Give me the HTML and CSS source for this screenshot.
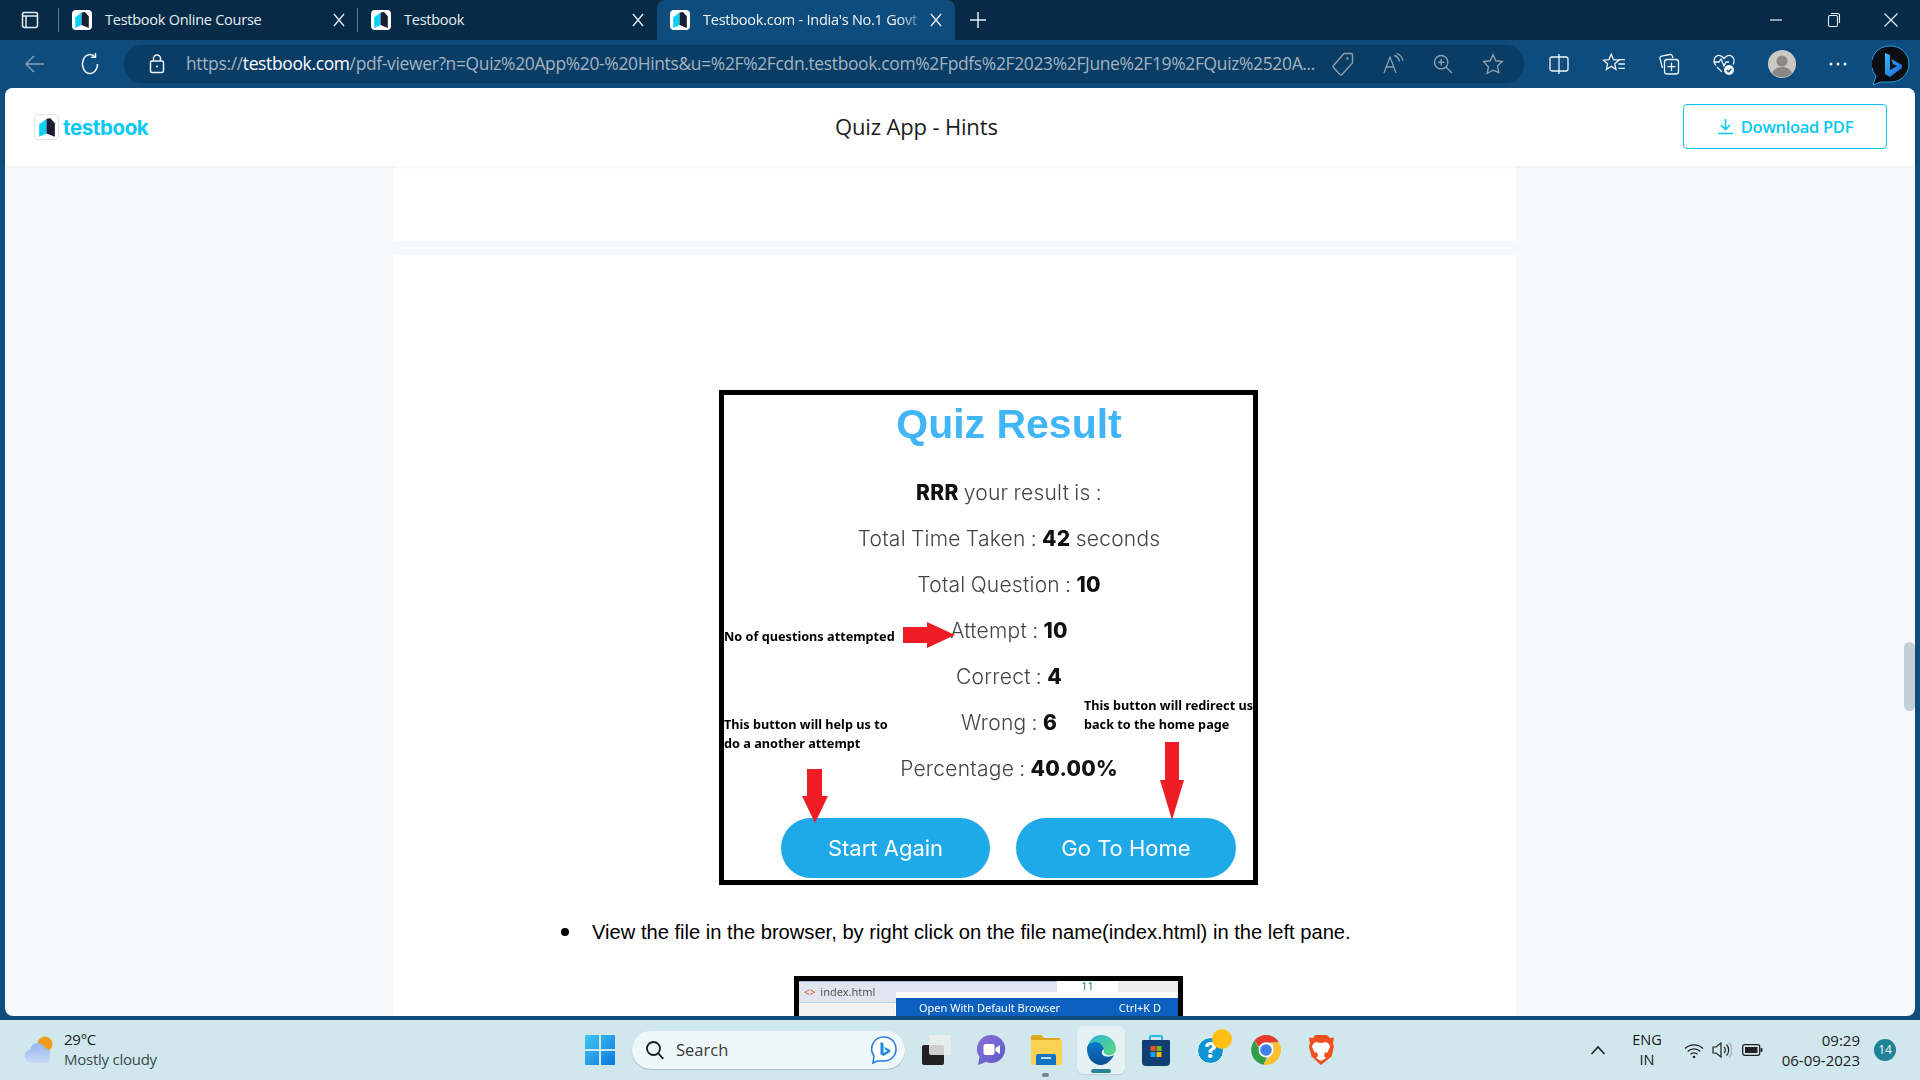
FILE: index.html
```html
<!DOCTYPE html>
<html lang="en">
<head>
<meta charset="utf-8">
<title>Testbook.com - India's No.1 Govt Exam Preparation</title>
<link rel="stylesheet" href="styles.css">
</head>
<body>
<svg class="defs" width="0" height="0" aria-hidden="true">
  <symbol id="book" viewBox="4 3 16 18.500">
    <path d="M5 9.500 11.600 4.500V17.500L5 20.500Z" fill="#0ad0f5"/>
    <path d="M11.600 4.500 15 4 19 8.500V20.500L11.600 17.500Z" fill="#1b1d33"/>
  </symbol>
  <symbol id="close" viewBox="0 0 12 14">
    <path d="M1 1l10 12M11 1 1 13" fill="none" stroke="#e6edf2" stroke-width="1.300"/>
  </symbol>
</svg>

<div class="titlebar">
  <div class="tabstrip-btn">
    <svg width="20" height="20" viewBox="0 0 20 20" fill="none" stroke="#e6edf2" stroke-width="1.5"><rect x="2.500" y="2.500" width="15" height="15" rx="2"/><path d="M2.500 6h15M6 6v11.500"/></svg>
  </div>
  <div class="tab">
    <span class="fav"><svg width="16" height="18"><use href="#book"/></svg></span>
    <span class="tab-title">Testbook Online Course</span>
    <svg class="tab-x" width="12" height="14"><use href="#close"/></svg>
  </div>
  <div class="tab">
    <span class="fav"><svg width="16" height="18"><use href="#book"/></svg></span>
    <span class="tab-title">Testbook</span>
    <svg class="tab-x" width="12" height="14"><use href="#close"/></svg>
  </div>
  <div class="tab tab-active">
    <span class="fav"><svg width="16" height="18"><use href="#book"/></svg></span>
    <span class="tab-title tab-fade">Testbook.com - India's No.1 Govt</span>
    <svg class="tab-x" width="12" height="14"><use href="#close"/></svg>
  </div>
  <div class="newtab">
    <svg width="18" height="18" viewBox="0 0 18 18" stroke="#e6edf2" stroke-width="1.5"><path d="M9 1v16M1 9h16"/></svg>
  </div>
  <div class="winctl">
    <span class="wbtn"><svg width="14" height="14" viewBox="0 0 14 14" stroke="#e6edf2" stroke-width="1.200"><path d="M1 7h12"/></svg></span>
    <span class="wbtn"><svg width="14" height="16" viewBox="0 0 14 16" fill="none" stroke="#e6edf2" stroke-width="1.100"><rect x="1.500" y="3.500" width="9" height="11" rx="1.500"/><path d="M4 1.500h6.500a2 2 0 0 1 2 2V11"/></svg></span>
    <span class="wbtn"><svg width="14" height="14" viewBox="0 0 14 14" stroke="#e6edf2" stroke-width="1.200"><path d="M.5.5l13 13M13.500.5l-13 13"/></svg></span>
  </div>
</div>

<div class="toolbar">
  <span class="tb tb-first"><svg width="22" height="22" viewBox="0 0 22 22" fill="none" stroke="#7d9cb5" stroke-width="1.5"><path d="M20 11H2M10 3l-8 8 8 8"/></svg></span>
  <span class="tb"><svg width="22" height="24" viewBox="0 0 22 24" fill="none" stroke="#f0f4f7" stroke-width="1.500"><path d="M18.500 12a7.500 9.500 0 1 1-2.600-7.200"/><path d="M16.500 1v4.300h-4.300"/></svg></span>
  <div class="urlbar">
    <span class="lock"><svg width="16" height="20" viewBox="0 0 16 20" fill="none" stroke="#f0f4f7" stroke-width="1.5"><rect x="1.500" y="7" width="13" height="11.500" rx="1.500"/><path d="M4.500 7V4.500a3.500 3.500 0 0 1 7 0V7"/><circle cx="8" cy="12.500" r="1" fill="#f0f4f7" stroke="none"/></svg></span>
    <span class="url">https://<b>testbook.com</b>/pdf-viewer?n=Quiz%20App%20-%20Hints&amp;u=%2F%2Fcdn.testbook.com%2Fpdfs%2F2023%2FJune%2F19%2FQuiz%2520A...</span>
    <span class="ub"><svg width="24" height="26" viewBox="0 0 24 26" fill="none" stroke="#8f9fac" stroke-width="1.400"><path d="M13 2.500h7a1.500 1.500 0 0 1 1.500 1.500v8L11 23.500a1.500 1.500 0 0 1-2 0L2.500 16.500a1.500 1.500 0 0 1 0-2Z"/><circle cx="16.500" cy="7.500" r="1.200" fill="#8f9fac" stroke="none"/></svg></span>
    <span class="ub"><svg width="22" height="22" viewBox="0 0 22 22" fill="none" stroke="#8f9fac" stroke-width="1.300"><path d="M2 20 8 4l6 16M4.500 14h7"/><path d="M12 2.500c3 .7 5 3 5.500 6M14.500.5c3.500 1 5.500 3.500 6.500 7"/></svg></span>
    <span class="ub"><svg width="20" height="20" viewBox="0 0 20 20" fill="none" stroke="#8f9fac" stroke-width="1.400"><circle cx="8.200" cy="8.200" r="6.700"/><path d="M13 13l6 6M5 8.200h6.400M8.200 5v6.400"/></svg></span>
    <span class="ub"><svg width="22" height="22" viewBox="0 0 22 22" fill="none" stroke="#8f9fac" stroke-width="1.400"><path d="M11 1.800l2.800 6 6.500.8-4.800 4.400 1.300 6.500L11 17.200l-5.800 3.300 1.300-6.500L1.700 8.600l6.500-.8Z"/></svg></span>
  </div>
  <span class="tb tb-right"><svg width="20" height="20" viewBox="0 0 20 20" fill="none" stroke="#f0f4f7" stroke-width="1.300"><rect x="1" y="3" width="18" height="14" rx="2"/><path d="M10 0v20"/></svg></span>
  <span class="tb"><svg width="24" height="24" viewBox="0 0 22 22" fill="none" stroke="#f0f4f7" stroke-width="1.200"><path d="M8.500 2l2 5 5 .5-3.800 3.300 1.100 5.200-4.300-2.800L4 16l1.100-5.200L1.300 7.500l5-.5Z"/><path d="M15 7h6M15 11h6M15 15h6"/></svg></span>
  <span class="tb"><svg width="22" height="22" viewBox="0 0 22 22" fill="none" stroke="#f0f4f7" stroke-width="1.300"><path d="M4.500 15 2 5.500a2 2 0 0 1 1.500-2.400L12 1.500a2 2 0 0 1 2.300 1.400L15 5"/><rect x="6.500" y="6.500" width="14" height="14.500" rx="2.500"/><path d="M13.500 9.500v8.500M9.500 13.700h8"/></svg></span>
  <span class="tb"><svg width="24" height="24" viewBox="0 0 24 24" fill="none" stroke="#f0f4f7" stroke-width="1.300"><path d="M4 13.500C1.500 10.500 1.500 6.500 4 4.500c2.500-2 5.500-1 8 2 2.500-3 5.500-4 8-2 2.500 2 2.500 5.500 1 8"/><path d="M1.500 10H7l2-3 3 7 2-4h3"/><path d="M5 15l5 5"/><circle cx="17" cy="18" r="5" fill="#f0f4f7" stroke="none"/><path d="M14.800 18l1.700 1.700 2.800-3" stroke="#0d4c7c"/></svg></span>
  <span class="tb tb-avatar"><svg width="28" height="28" viewBox="0 0 28 28"><circle cx="14" cy="14" r="14" fill="#cbc8c4"/><circle cx="14" cy="11" r="5.500" fill="#8b8782"/><path d="M4 23c2-4.500 6-6 10-6s8 1.500 10 6a14 14 0 0 1-20 0Z" fill="#8b8782"/></svg></span>
  <span class="tb tb-dots"><svg width="18" height="4" viewBox="0 0 18 4" fill="#f0f4f7"><circle cx="2" cy="2" r="1.500"/><circle cx="9" cy="2" r="1.500"/><circle cx="16" cy="2" r="1.500"/></svg></span>
  <span class="tb tb-bing">
    <svg width="38" height="42" viewBox="0 0 38 42"><defs><linearGradient id="bg1" x1="0" y1="0" x2="1" y2="1"><stop offset="0" stop-color="#37bdf8"/><stop offset="1" stop-color="#1a5fd8"/></linearGradient></defs><path d="M19 1a18 18 0 0 1 0 36H9L1 40l3-9A18 18 0 0 1 19 1Z" fill="#0d0e14" stroke="#2b9ee0" stroke-width="1"/><path d="M13 8l5 2v15l7-4-4-2-2-5 11 6v3L18 32l-5-3Z" fill="url(#bg1)"/></svg>
  </span>
</div>

<div class="shell">
  <main class="viewer">
    <header class="vhead">
      <div class="brand">
        <span class="brand-mark"><svg width="18" height="21"><use href="#book"/></svg></span>
        <span class="brand-name">testbook</span>
      </div>
      <div class="doc-title">Quiz App - Hints</div>
      <button class="dl">
        <svg width="17" height="17" viewBox="0 0 17 17" fill="none" stroke="#06c8f2" stroke-width="1.600"><path d="M8.500 1v10M4 7l4.500 4.500L13 7M1 15.500h15"/></svg>
        <span>Download PDF</span>
      </button>
    </header>
    <div class="scroll">
      <div class="pages">
        <div class="page page-stub"></div>
        <div class="page page-main">
          <div class="figure">
            <h1 class="fig-title">Quiz Result</h1>
            <div class="rows">
              <p class="row"><b>RRR</b> your result is :</p>
              <p class="row">Total Time Taken : <b>42</b> seconds</p>
              <p class="row">Total Question : <b>10</b></p>
              <p class="row">Attempt : <b>10</b></p>
              <p class="row">Correct : <b>4</b></p>
              <p class="row">Wrong : <b>6</b></p>
              <p class="row">Percentage : <b>40.00%</b></p>
            </div>
            <div class="actions">
              <span class="pill pill-a">Start Again</span>
              <span class="pill pill-b">Go To Home</span>
            </div>
            <span class="note note-1">No of questions attempted</span>
            <span class="note note-2">This button will help us to<br>do a another attempt</span>
            <span class="note note-3">This button will redirect us<br>back to the home page</span>
            <svg class="arrow arrow-r" width="52" height="26" viewBox="0 0 52 26" fill="#ee1c25"><path d="M0 5h24V0l28 13-28 13v-5H0Z"/></svg>
            <svg class="arrow arrow-d1" width="26" height="54" viewBox="0 0 26 54" fill="#ee1c25"><path d="M5 0h15v27h6L13 54 0 27h5Z"/></svg>
            <svg class="arrow arrow-d2" width="24" height="78" viewBox="0 0 24 78" fill="#ee1c25"><path d="M5 0h14v38h5L12 78 0 38h5Z"/></svg>
          </div>
          <div class="bullet"><span class="dot"></span><span>View the file in the browser, by right click on the file name(index.html) in the left pane.</span></div>
          <div class="figure2">
            <div class="f2-top">
              <div class="f2-file"><span class="f2-code">&lt;&gt;</span> index.html</div>
              <div class="f2-num">11</div>
              <div class="f2-gray"></div>
            </div>
            <div class="f2-bottom"></div>
            <div class="f2-menu"><div class="f2-item"><span>Open With Default Browser</span><span>Ctrl+K D</span></div></div>
          </div>
        </div>
      </div>
      <div class="thumb"></div>
    </div>
  </main>
</div>

<footer class="taskbar">
  <div class="weather">
    <svg width="34" height="30" viewBox="0 0 34 30"><defs><linearGradient id="cl" x1="0" y1="0" x2="0" y2="1"><stop offset="0" stop-color="#94b6ee"/><stop offset="1" stop-color="#c9dbf7"/></linearGradient></defs><circle cx="22" cy="9" r="7.500" fill="#f29c1f"/><path d="M8 28a7 7 0 0 1-1-13.800A8 8 0 0 1 22 13a6 6 0 0 1 5 8 6 7 0 0 1-3 7Z" fill="url(#cl)"/></svg>
    <div class="w-text"><div>29°C</div><div class="w-sub">Mostly cloudy</div></div>
  </div>
  <div class="tcenter">
    <span class="winlogo"><svg width="30" height="30" viewBox="0 0 30 30"><defs><linearGradient id="win" x1="0" y1="0" x2="1" y2="1"><stop offset="0" stop-color="#43c7f7"/><stop offset="1" stop-color="#0a76dc"/></linearGradient></defs><path d="M0 1a1 1 0 0 1 1-1h13v14H0ZM16 0h13a1 1 0 0 1 1 1v13H16ZM0 16h14v14H1a1 1 0 0 1-1-1ZM16 16h14v13a1 1 0 0 1-1 1H16Z" fill="url(#win)"/></svg></span>
    <div class="search">
      <svg width="20" height="20" viewBox="0 0 20 20" fill="none" stroke="#1b1b1b" stroke-width="1.800"><circle cx="8.500" cy="8.500" r="6.500"/><path d="M13.300 13.300l5 5.500"/></svg>
      <span class="search-text">Search</span>
      <svg class="search-bing" width="26" height="28" viewBox="0 0 26 28"><path d="M13 1a12 12 0 0 1 0 24H6L2 27l1-7A12 12 0 0 1 13 1Z" fill="#fff" stroke="#2a7de1" stroke-width="1.600"/><path d="M9.500 6l3 1.200v9.800l4-2.300-2.300-1-1-3 6 3.200v2L12.500 20l-3-1.800Z" fill="#1a8ae6"/></svg>
    </div>
    <span class="ti ti-view"><svg width="30" height="30" viewBox="0 0 30 30"><rect x="1" y="10" width="22" height="20" rx="2" fill="#222"/><rect x="8" y="0" width="22" height="20" rx="2" fill="#ececec" fill-opacity=".85"/></svg></span>
    <span class="ti"><svg width="30" height="32" viewBox="0 0 30 32"><defs><linearGradient id="tm" x1="0" y1="0" x2="1" y2="1"><stop offset="0" stop-color="#8a6fd8"/><stop offset="1" stop-color="#5b5bc8"/></linearGradient></defs><path d="M15 1a14 14 0 1 1-5 27L2 31l1.500-8A14 14 0 0 1 15 1Z" fill="url(#tm)"/><rect x="7.500" y="10" width="11" height="11" rx="2" fill="#fff"/><path d="M19.500 14l4.500-3v9l-4.500-3Z" fill="#fff"/></svg></span>
    <span class="ti ti-run"><svg width="32" height="30" viewBox="0 0 32 30"><path d="M1 2a2 2 0 0 1 2-2h8l3 3h16v5H1Z" fill="#dba71c"/><path d="M1 5h29a2 2 0 0 1 2 2v21a2 2 0 0 1-2 2H3a2 2 0 0 1-2-2Z" fill="#fbd254"/><path d="M6 21a2 2 0 0 1 2-2h16a2 2 0 0 1 2 2v9H6Z" fill="#1273c4"/><rect x="11" y="22" width="10" height="2" fill="#bfe0f7"/></svg></span>
    <span class="ti ti-active"><svg width="30" height="30" viewBox="0 0 30 30"><defs><linearGradient id="e1" x1="0" y1="0" x2="1" y2="1"><stop offset="0" stop-color="#2ab5d8"/><stop offset="1" stop-color="#5fdc7c"/></linearGradient><linearGradient id="e2" x1="0" y1="0" x2="0" y2="1"><stop offset="0" stop-color="#0b78c8"/><stop offset="1" stop-color="#0b4f9a"/></linearGradient></defs><path d="M1 14C2 6 8 0 15 0c8 0 15 6 15 14 0 5-5 7-9 6-3-1-4-3-3-5-1-3-4-4-7-3-5 1-8 4-10 2Z" fill="url(#e1)"/><path d="M1 14c0-5 5-7 8-7 4 0 7 2 9 7-3 2-3 5 0 7 3 1 7 1 10-1-3 6-8 10-13 10C7 30 1 23 1 14Z" fill="url(#e2)"/></svg></span>
    <span class="ti"><svg width="28" height="32" viewBox="0 0 28 32"><path d="M8 7V3a1 1 0 0 1 1-1h10a1 1 0 0 1 1 1v4" fill="none" stroke="#2bb4e8" stroke-width="2"/><path d="M0 7a1 1 0 0 1 1-1h26a1 1 0 0 1 1 1v21a4 4 0 0 1-4 4H4a4 4 0 0 1-4-4Z" fill="#123f73"/><rect x="8.500" y="12" width="5" height="5" fill="#f25022"/><rect x="14.500" y="12" width="5" height="5" fill="#7fba00"/><rect x="8.500" y="18" width="5" height="5" fill="#00a4ef"/><rect x="14.500" y="18" width="5" height="5" fill="#ffb900"/></svg></span>
    <span class="ti ti-help"><span class="help">?</span><span class="help-badge"></span></span>
    <span class="ti"><svg width="30" height="30" viewBox="0 0 30 30"><path d="M15 0a15 15 0 0 1 13 7.500H15A7.500 7.500 0 0 0 8 12L3.500 5.500A15 15 0 0 1 15 0Z" fill="#e33b2e"/><path d="M3.500 5.500 9.500 16a7 7 0 0 0 7 5.800L12.500 29.700A15 15 0 0 1 3.500 5.500Z" fill="#2f9e44"/><path d="M28 7.500A15 15 0 0 1 12.500 29.700L19.500 18A7 7 0 0 0 20.500 7.500Z" fill="#fbc02d"/><circle cx="15" cy="15" r="7.500" fill="#fff"/><circle cx="15" cy="15" r="5.800" fill="#3d7ee8"/></svg></span>
    <span class="ti"><svg width="26" height="30" viewBox="0 0 26 30"><path d="M7 0h12l3 3 4-.5-1 6 1 3-2.500 10L13 30 3.500 21.500 1 11.500l1-3-1-6 4 .5Z" fill="#f1501e"/><path d="M13 8c2 0 3-1 5-1l3 2 1 3-3 6-2-1-1 4 2 2-5 3-5-3 2-2-1-4-2 1-3-6 1-3 3-2c2 0 3 1 5 1Z" fill="#fff"/></svg></span>
  </div>
  <div class="tray">
    <svg width="16" height="10" viewBox="0 0 16 10" fill="none" stroke="#222" stroke-width="1.600"><path d="M1.500 9 8 2l6.500 7"/></svg>
    <div class="lang"><div>ENG</div><div>IN</div></div>
    <svg class="tray-wifi" width="20" height="17" viewBox="0 0 20 17" fill="none" stroke="#222" stroke-width="1.200"><path d="M1 6.500a13 13 0 0 1 18 0M3.700 9.500a9 9 0 0 1 12.600 0M6.500 12.300a5 5 0 0 1 7 0"/><circle cx="10" cy="15" r="1.300" fill="#222" stroke="none"/></svg>
    <svg class="tray-vol" width="20" height="18" viewBox="0 0 20 18" fill="none" stroke="#222" stroke-width="1.200"><path d="M1 6h3l5-4v14l-5-4H1Z"/><path d="M12 6a4 4 0 0 1 0 6M14.500 3.500a8 8 0 0 1 0 11"/><path d="M17 1.500a11 11 0 0 1 0 15" stroke="#aab"/></svg>
    <svg class="tray-bat" width="21" height="12" viewBox="0 0 21 12"><rect x=".7" y=".7" width="17" height="10.600" rx="2" fill="none" stroke="#222" stroke-width="1.300"/><rect x="3" y="3" width="12.500" height="6" fill="#222"/><rect x="18.500" y="4" width="2" height="4" rx="1" fill="#222"/></svg>
    <div class="clock"><div>09:29</div><div>06-09-2023</div></div>
    <span class="badge">14</span>
  </div>
</footer>
</body>
</html>
```

FILE: styles.css
```css
* { box-sizing: border-box; }
html, body { margin: 0; padding: 0; }
body {
  width: 1920px;
  height: 1080px;
  overflow: hidden;
  display: flex;
  flex-direction: column;
  background: #0d4c7c;
  font-family: "Open Sans", "Noto Sans", sans-serif;
}
.defs { position: absolute; }

/* Title bar */
.titlebar {
  height: 40px;
  flex: none;
  display: flex;
  align-items: stretch;
  background: #072b47;
  color: #e6edf2;
}
.tabstrip-btn {
  width: 59px;
  display: flex;
  align-items: center;
  justify-content: center;
  position: relative;
}
.tab {
  width: 299px;
  display: flex;
  align-items: center;
  padding: 0 13px 0 13px;
  font-size: 14.500px;
  line-height: 18px;
  position: relative;
  letter-spacing: -0.25px;
}
.tab::before {
  content: "";
  position: absolute;
  left: -1px;
  top: 8px;
  bottom: 8px;
  width: 1px;
  background: #5d7587;
}
.tab-active {
  width: 298px;
  background: #0d4c7c;
  border-radius: 8px 8px 0 0;
  color: #f1f5f8;
}
.tab-active::before { display: none; }
.fav {
  width: 20px;
  height: 20px;
  flex: none;
  background: #fff;
  border-radius: 4px;
  display: flex;
  align-items: center;
  justify-content: center;
}
.tab-title {
  flex: 1;
  min-width: 0;
  margin: 0 4px 1px 13px;
  white-space: nowrap;
}
.tab-fade {
  overflow: hidden;
  -webkit-mask-image: linear-gradient(90deg, #000 88%, transparent 100%);
  mask-image: linear-gradient(90deg, #000 88%, transparent 100%);
}
.tab-x {
  flex: none;
}
.newtab {
  width: 46px;
  display: flex;
  align-items: center;
  justify-content: center;
}
.winctl {
  margin-left: auto;
  display: flex;
  align-items: center;
}
.wbtn {
  width: 57.500px;
  display: flex;
  justify-content: center;
}

/* Toolbar */
.toolbar {
  height: 48px;
  flex: none;
  display: flex;
  align-items: center;
  background: #0d4c7c;
}
.tb {
  width: 55px;
  height: 48px;
  flex: none;
  display: flex;
  align-items: center;
  justify-content: center;
}
.tb-first { margin-left: 7px; }
.tb-right { margin-left: 7px; }
.tb-avatar { width: 61px; }
.tb-dots { width: 51px; }
.tb-bing { width: 56px; padding-top: 3px; }
.urlbar {
  width: 1400px;
  height: 38px;
  margin-left: 7px;
  flex: none;
  display: flex;
  align-items: center;
  background: #093d66;
  border-radius: 19px;
  padding-right: 6px;
}
.lock {
  width: 62px;
  padding-left: 3px;
  flex: none;
  display: flex;
  justify-content: center;
}
.url {
  flex: 1;
  min-width: 0;
  margin-bottom: 2px;
  font-size: 17.450px;
  letter-spacing: -0.34px;
  color: #a3b2bf;
  white-space: nowrap;
  overflow: hidden;
}
.url b { font-weight: 400; color: #fff; }
.ub {
  width: 50px;
  flex: none;
  display: flex;
  justify-content: center;
}

/* Viewer */
.shell {
  height: 932px;
  flex: none;
  padding: 0 5px 4px;
  background: #0d4c7c;
}
.viewer {
  height: 928px;
  display: flex;
  flex-direction: column;
  overflow: hidden;
  border-radius: 8px;
  background: #f7f8fb;
}
.vhead {
  height: 78px;
  flex: none;
  position: relative;
  z-index: 1;
  display: flex;
  align-items: center;
  background: #fff;
  box-shadow: 0 1px 3px rgba(0, 0, 0, .06);
  padding: 0 28px 0 29px;
}
.brand {
  width: 801px;
  flex: none;
  display: flex;
  align-items: center;
  gap: 4px;
}
.brand-mark {
  width: 25px;
  height: 26px;
  border: 1px solid #dfe3ea;
  border-radius: 4px;
  display: flex;
  align-items: center;
  justify-content: center;
}
.brand-name {
  font-family: "Inter", sans-serif;
  font-weight: 700;
  font-size: 20.500px;
  letter-spacing: -0.4px;
  color: #07c9f2;
}
.doc-title {
  margin-bottom: 2px;
  font-size: 22px;
  letter-spacing: -0.15px;
  color: #1c1c1c;
}
.dl {
  margin: 0 0 2px auto;
  width: 204px;
  height: 45px;
  display: flex;
  align-items: center;
  justify-content: center;
  gap: 7px;
  background: #fff;
  border: 1px solid #06c8f2;
  border-radius: 4px;
  color: #06c8f2;
  font-family: inherit;
  font-weight: 600;
  font-size: 16.500px;
  letter-spacing: -0.3px;
}
.scroll {
  flex: 1;
  min-height: 0;
  position: relative;
  overflow: hidden;
}
.pages {
  width: 1122px;
  margin-left: 389px;
  display: flex;
  flex-direction: column;
  gap: 14px;
}
.page { background: #fff; }
.page-stub { height: 75px; }
.page-main { padding-top: 135px; height: 900px; }
.thumb {
  position: absolute;
  right: 0;
  top: 476px;
  width: 11px;
  height: 69px;
  border-radius: 6px;
  background: #c2d0d9;
}

/* Figure 1 */
.figure {
  width: 539px;
  height: 495px;
  margin-left: 325px;
  border: 5px solid #000;
  position: relative;
  font-family: "Inter", sans-serif;
  filter: blur(.3px);
}
.fig-title {
  margin: 0 0 17px;
  height: 58px;
  line-height: 58px;
  padding-left: 41px;
  text-align: center;
  font-family: "Liberation Sans", sans-serif;
  font-weight: 700;
  font-size: 41px;
  color: #42b5f7;
}
.rows { padding-left: 41px; }
.row {
  margin: 0;
  height: 46px;
  line-height: 46px;
  text-align: center;
  font-size: 21px;
  font-weight: 300;
  letter-spacing: .25px;
  word-spacing: -1px;
  color: #444;
}
.row b { font-weight: 800; color: #111; }
.actions {
  margin-top: 26px;
  padding-left: 57px;
  display: flex;
  gap: 26px;
}
.pill {
  height: 60px;
  border-radius: 30px;
  background: #1fa9e8;
  color: #fff;
  font-size: 22px;
  font-weight: 400;
  display: flex;
  align-items: center;
  justify-content: center;
}
.pill-a { width: 209px; }
.pill-b { width: 220px; }
.note {
  position: absolute;
  white-space: nowrap;
  font-family: "Noto Sans", sans-serif;
  font-weight: 700;
  font-size: 12.700px;
  line-height: 19px;
  color: #000;
}
.note-1 { left: 0; top: 232px; }
.note-2 { left: 0; top: 320px; }
.note-3 { left: 360px; top: 301px; }
.arrow { position: absolute; }
.arrow-r { left: 179px; top: 227px; }
.arrow-d1 { left: 78px; top: 374px; }
.arrow-d2 { left: 436px; top: 347px; }

/* Bullet */
.bullet {
  margin-top: 35px;
  padding-left: 167px;
  height: 24px;
  display: flex;
  align-items: center;
  gap: 23px;
  font-family: "Liberation Sans", sans-serif;
  font-size: 20.150px;
  color: #000;
}
.dot {
  width: 8px;
  height: 8px;
  border-radius: 50%;
  background: #000;
  flex: none;
}

/* Figure 2 */
.figure2 {
  width: 389px;
  height: 120px;
  margin: 32px 0 0 400px;
  border: 5px solid #000;
  position: relative;
  background: #fff;
  font-family: "Noto Sans", sans-serif;
  filter: blur(.3px);
}
.f2-top { display: flex; height: 22px; }
.f2-file {
  width: 258px;
  height: 22px;
  padding-left: 5px;
  background: #e1e4ef;
  border-top: 1px solid #8fc0ee;
  border-bottom: 1px solid #b5d2f0;
  font-size: 11px;
  line-height: 20px;
  color: #555;
}
.f2-code { color: #c4602f; font-size: 10px; margin-right: 2px; }
.f2-num { width: 61px; text-align: center; font-size: 11px; line-height: 10px; color: #1f7f8f; }
.f2-gray { flex: 1; height: 11px; background: #ececec; }
.f2-bottom { height: 90px; background: #f2f2f2; width: 96px; }
.f2-menu {
  position: absolute;
  left: 97px;
  top: 11px;
  right: 0;
  bottom: 0;
  background: #fff;
  padding-top: 6px;
}
.f2-item {
  height: 22px;
  display: flex;
  justify-content: space-between;
  padding: 0 17px 0 23px;
  background: #0a5fbf;
  color: #fff;
  font-size: 11px;
  line-height: 20px;
}

/* Taskbar */
.taskbar {
  height: 60px;
  flex: none;
  display: flex;
  align-items: center;
  background: #cfe7ed;
  color: #1b1b1b;
  padding-left: 23px;
}
.weather {
  width: 562px;
  flex: none;
  display: flex;
  align-items: center;
  gap: 7px;
}
.w-text { margin-bottom: 2px; font-size: 15px; line-height: 20px; letter-spacing: -0.25px; }
.w-sub { color: #3d4a50; }
.tcenter {
  display: flex;
  align-items: center;
  width: 1005px;
  flex: none;
}
.winlogo { width: 47px; flex: none; display: flex; }
.search {
  width: 273px;
  height: 38px;
  flex: none;
  display: flex;
  align-items: center;
  padding: 0 5px 0 13px;
  border-radius: 19px;
  background: #eef7f9;
  box-shadow: 0 1px 1px rgba(0, 0, 0, .18);
}
.search-text { margin: 0 0 1px 11px; font-size: 16.500px; color: #3a3a3a; }
.search-bing { margin-left: auto; margin-right: 3px; }
.ti {
  width: 55px;
  height: 48px;
  flex: none;
  display: flex;
  align-items: center;
  justify-content: center;
  position: relative;
}
.ti-view { margin-left: 3px; }
.ti-run::after {
  content: "";
  position: absolute;
  left: 24px;
  bottom: -3px;
  width: 7px;
  height: 4px;
  border-radius: 2px;
  background: #7b868c;
}
.ti-active {
  width: 48px;
  margin: 0 3.500px;
  background: #e4f2f6;
  border-radius: 6px;
  box-shadow: 0 1px 1px rgba(0, 0, 0, .1);
}
.ti-active::after {
  content: "";
  position: absolute;
  left: 14px;
  bottom: 1px;
  width: 20px;
  height: 4px;
  border-radius: 2px;
  background: #2a8596;
}
.ti-help { font-family: "Inter", sans-serif; }
.help {
  width: 27px;
  height: 27px;
  border-radius: 50%;
  background: #0e93d3;
  border: 1.500px solid #fff;
  color: #fff;
  font-weight: 800;
  font-size: 22px;
  line-height: 24px;
  text-align: center;
}
.help-badge {
  position: absolute;
  left: 29px;
  top: 3px;
  width: 20px;
  height: 20px;
  border-radius: 50%;
  background: #fdc011;
}
.tray {
  flex: 1;
  display: flex;
  align-items: center;
}
.lang {
  width: 60px;
  margin-left: 11px;
  text-align: center;
  font-size: 14.500px;
  line-height: 20px;
}
.tray-wifi { margin-left: 7px; }
.tray-vol { margin-left: 8px; }
.tray-bat { margin-left: 10px; }
.clock {
  width: 97px;
  text-align: right;
  font-size: 15px;
  line-height: 20px;
}
.badge {
  width: 22px;
  height: 22px;
  margin-left: 14px;
  border-radius: 50%;
  background: #1f8296;
  color: #fff;
  font-size: 12px;
  line-height: 22px;
  text-align: center;
}
```
